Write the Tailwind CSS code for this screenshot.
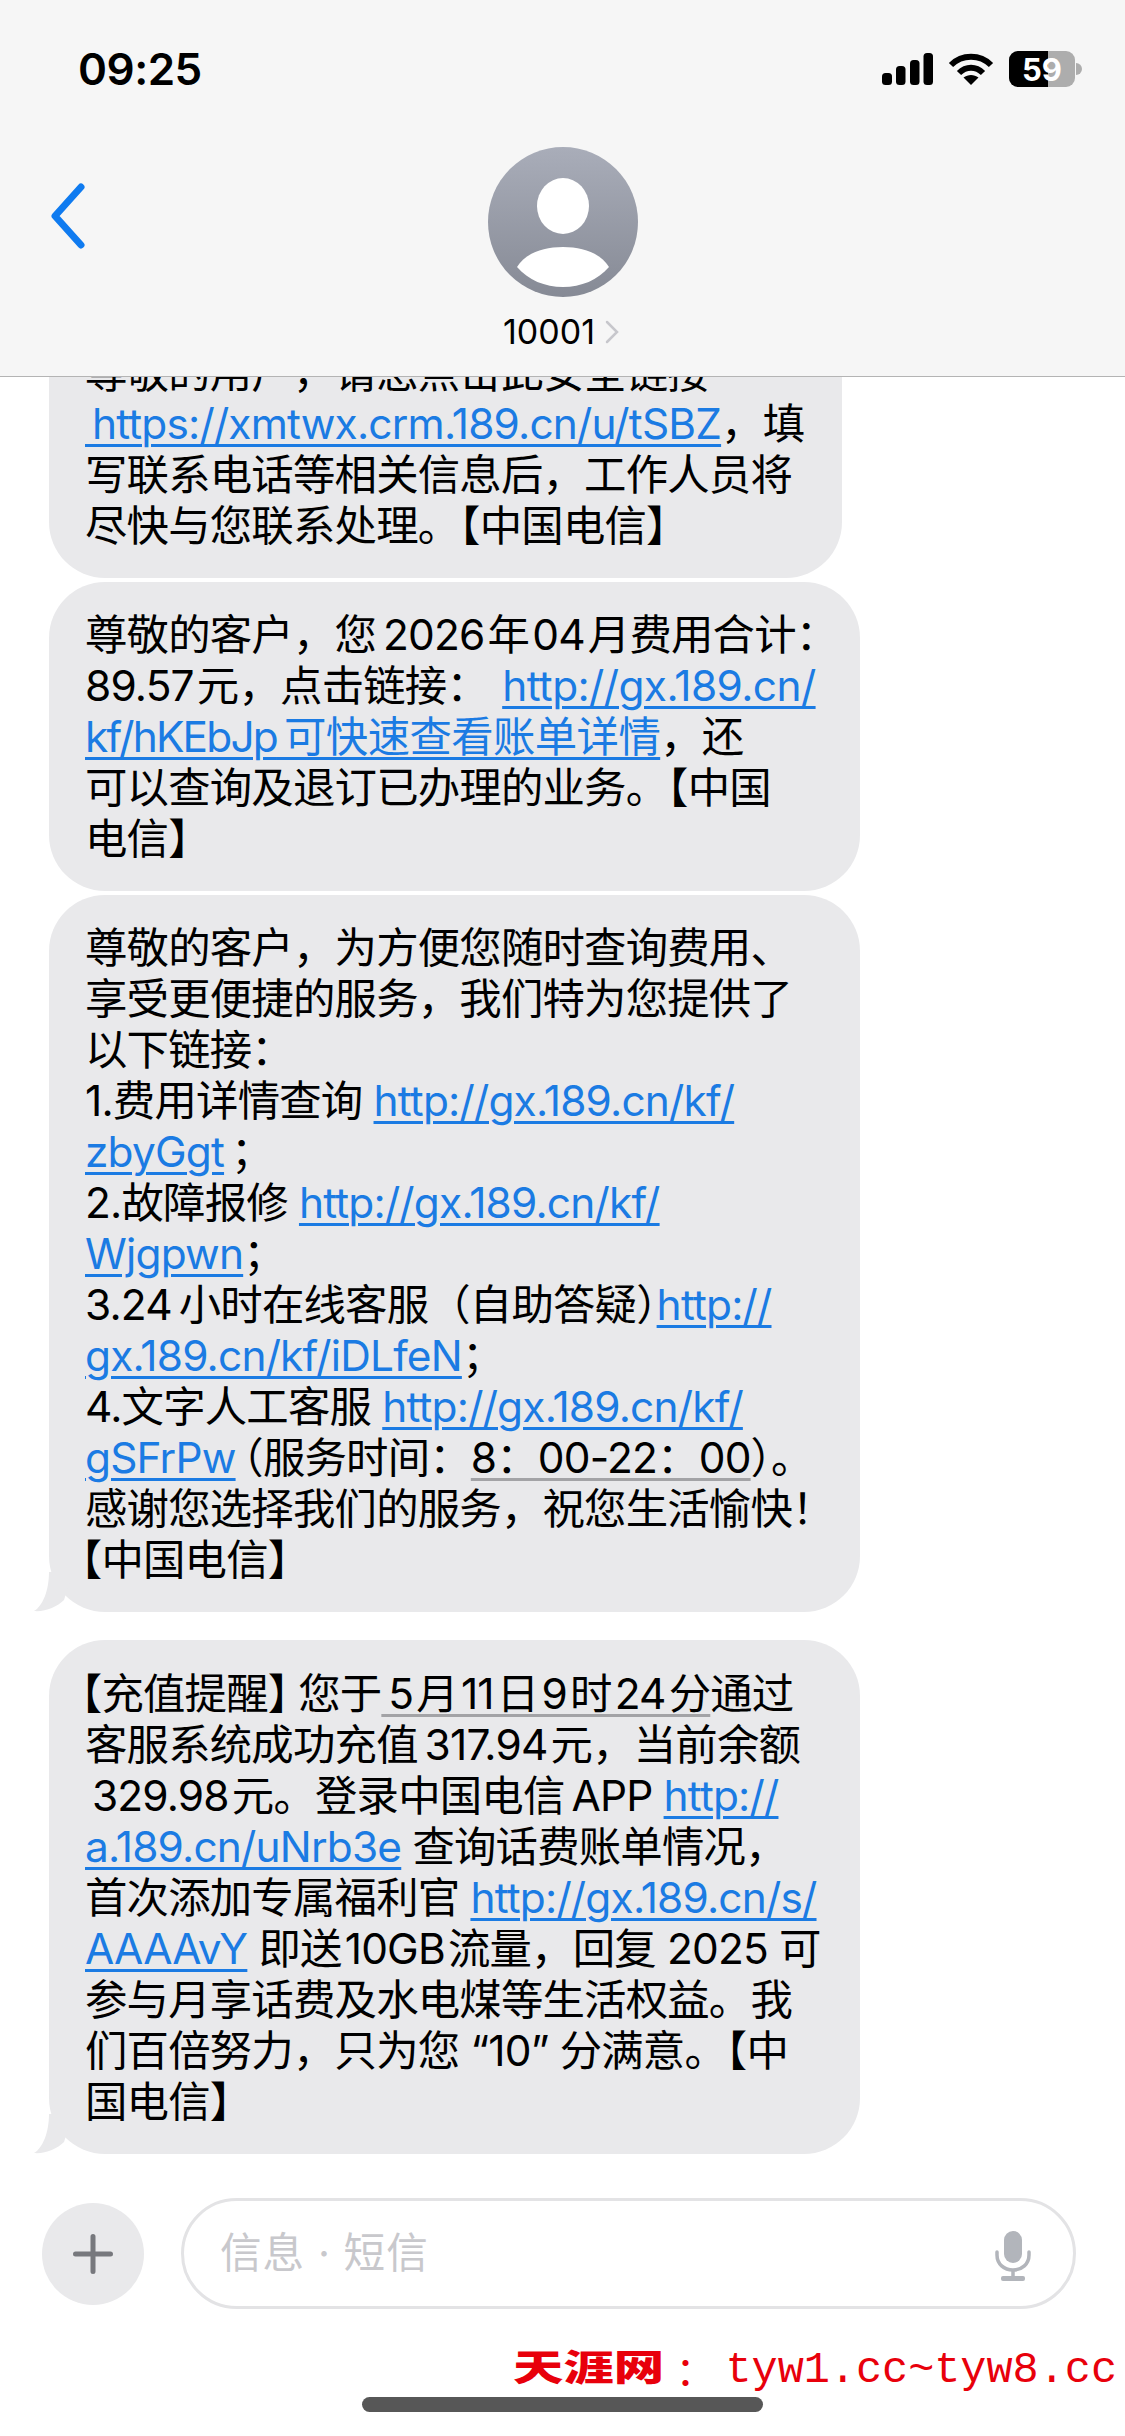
<!DOCTYPE html>
<html lang="zh-CN">
<head>
    <meta charset="UTF-8">
    <title>10001</title>
    <script src="https://cdn.jsdelivr.net/npm/@tailwindcss/browser@4"></script>
</head>
<body class="bg-white">
    <div class="w-[1125px] h-[2436px] flex flex-col overflow-hidden bg-white text-black font-['Inter','Noto_Sans_CJK_SC',sans-serif]">

        <!-- Header -->
        <header class="h-[377px] shrink-0 bg-[#f6f6f6] border-b border-[#b4b4b4]">
            <div class="h-[36px] pt-[51px] box-content flex items-center justify-between pl-[78px] pr-[43px]">
                <span class="text-[44px] font-semibold leading-none tracking-[-0.5px]">09:25</span>
                <div class="flex items-center">
                    <svg class="w-[51px] h-[32px]" viewBox="0 0 51 32" fill="#000">
                        <rect x="0" y="20" width="10" height="12" rx="3.5"/>
                        <rect x="14" y="13" width="9.5" height="19" rx="3.5"/>
                        <rect x="28" y="7" width="9.5" height="25" rx="3.5"/>
                        <rect x="41.5" y="0" width="9.5" height="32" rx="3.5"/>
                    </svg>
                    <svg class="w-[46px] h-[34px] ml-[15px]" viewBox="0 0 46 34" fill="none" stroke="#000">
                        <path d="M3 13 C14 2 32 2 43 13" stroke-width="6"/>
                        <path d="M11 21 C18 14 28 14 35 21" stroke-width="6"/>
                        <path d="M23 33 L15.5 25.5 C20 22 26 22 30.5 25.5 Z" fill="#000" stroke="none"/>
                    </svg>
                    <div class="w-[66px] h-[36px] ml-[15px] rounded-[9px] overflow-hidden flex bg-[#adadad] relative">
                        <div class="w-[39px] bg-black"></div>
                        <span class="absolute inset-0 flex items-center justify-center text-white text-[31px] font-bold leading-none">59</span>
                    </div>
                    <div class="w-[6px] h-[12px] ml-[1px] bg-[#adadad] rounded-r-full"></div>
                </div>
            </div>
            <div class="grid grid-cols-[1fr_auto_1fr] mt-[60px]">
                <svg class="w-[40px] h-[66px] ml-[48px] mt-[36px]" viewBox="0 0 40 66" fill="none" stroke="#0f7bf0" stroke-width="7" stroke-linecap="round" stroke-linejoin="round">
                    <path d="M33 4 L7 33 L33 62"/>
                </svg>
                <div class="flex flex-col items-center">
                    <svg class="w-[150px] h-[150px]" viewBox="0 0 150 150">
                        <defs>
                            <linearGradient id="avatarBg" x1="0" y1="0" x2="0" y2="1">
                                <stop offset="0" stop-color="#a9adb9"/>
                                <stop offset="1" stop-color="#868a95"/>
                            </linearGradient>
                        </defs>
                        <circle cx="75" cy="75" r="75" fill="url(#avatarBg)"/>
                        <ellipse cx="75" cy="59" rx="26" ry="28" fill="#fff"/>
                        <path d="M29 120 C38 106 55 100 75 100 C95 100 112 106 121 120 C110 133 93 140 75 140 C57 140 40 133 29 120 Z" fill="#fff"/>
                    </svg>
                    <div class="flex items-center mt-[17px] -ml-[3px]">
                        <span class="text-[34px] leading-[36px]">10001</span>
                        <svg class="w-[14px] h-[24px] ml-[10px]" viewBox="0 0 14 24" fill="none" stroke="#c7c7cc" stroke-width="2.5" stroke-linecap="round">
                            <path d="M2 2 L12 12 L2 22"/>
                        </svg>
                    </div>
                </div>
                <div></div>
            </div>
        </header>

        <!-- Messages, pinned to the bottom and clipped under the header -->
        <main class="flex-1 min-h-0 overflow-hidden flex flex-col justify-end items-start pl-[49px] pb-[44px] text-[42.4px] tracking-[-0.8px] leading-[51px] whitespace-nowrap">
            <div class="w-[793px] shrink-0 bg-[#e9e9eb] rounded-[56px] pl-[36px] py-[27px]">
                尊敬的用户，请您点击此安全链接<br>
                <a class="text-[#1b7be3] underline decoration-[3px] underline-offset-[5px]">&thinsp;https://xmtwx.crm.189.cn/u/tSBZ</a>，填<br>
                写联系电话等相关信息后，工作人员将<br>
                尽快与您联系处理。【中国电信】
            </div>
            <div class="w-[811px] shrink-0 mt-[4px] bg-[#e9e9eb] rounded-[56px] pl-[36px] py-[27px]">
                尊敬的客户，您&thinsp;2026&hairsp;年&hairsp;04&hairsp;月费用合计：<br>
                89.57&hairsp;元，点击链接：&hairsp; <a class="text-[#1b7be3] underline decoration-[3px] underline-offset-[5px] tracking-[-0.6px]">http://gx.189.cn/<br><span class="tracking-[-1.8px]">kf/hKEbJp</span>&thinsp;可快速查看账单详情</a>，还<br>
                可以查询及退订已办理的业务。【中国<br>
                电信】
            </div>
            <div class="relative w-[811px] shrink-0 mt-[4px] bg-[#e9e9eb] rounded-[56px] pl-[36px] py-[27px]">
                尊敬的客户，为方便您随时查询费用、<br>
                享受更便捷的服务，我们特为您提供了<br>
                以下链接：<br>
                1.费用详情查询 <a class="text-[#1b7be3] underline decoration-[3px] underline-offset-[5px]">http://gx.189.cn/kf/<br>zbyGgt</a>&thinsp;；<br>
                2.故障报修 <a class="text-[#1b7be3] underline decoration-[3px] underline-offset-[5px]">http://gx.189.cn/kf/<br>Wjgpwn</a>；<br>
                3.24&thinsp;小时在线客服（自助答疑<span class="[font-feature-settings:'halt']">）</span><a class="text-[#1b7be3] underline decoration-[3px] underline-offset-[5px]">http://<br>gx.189.cn/kf/iDLfeN</a>；<br>
                4.文字人工客服 <a class="text-[#1b7be3] underline decoration-[3px] underline-offset-[5px]">http://gx.189.cn/kf/<br>gSFrPw</a>&thinsp;<span class="[font-feature-settings:'halt']">（</span>服务时间：<span class="underline decoration-[#a3a3a6] decoration-[3px] underline-offset-[5px]">8：00-22：00</span>）。<br>
                感谢您选择我们的服务，祝您生活愉快！<br>
                <span class="[font-feature-settings:'halt'] -ml-[4px]">【</span>中国电信<span class="[font-feature-settings:'halt']">】</span>
                <svg class="absolute left-[-16px] bottom-0 w-[40px] h-[40px]" viewBox="0 0 40 40" fill="#e9e9eb">
                    <path d="M16 0 C16 18 10 34 1 39 C12 40 24 35 31 28 L40 0 Z"/>
                </svg>
            </div>
            <div class="relative w-[811px] shrink-0 mt-[28px] bg-[#e9e9eb] rounded-[56px] pl-[36px] pt-[28px] pb-[27px]">
                <span class="[font-feature-settings:'halt'] -ml-[4px]">【</span>充值提醒<span class="[font-feature-settings:'halt']">】</span><span class="ml-[10px]">您于</span><span class="underline decoration-[#a3a3a6] decoration-[3px] underline-offset-[5px]">&thinsp;5&hairsp;月&hairsp;11&hairsp;日&hairsp;9&hairsp;时&hairsp;24&hairsp;分</span>通过<br>
                客服系统成功充值&thinsp;317.94&hairsp;元，当前余额<br>
                &thinsp;329.98&hairsp;元。登录中国电信&thinsp;APP <a class="text-[#1b7be3] underline decoration-[3px] underline-offset-[5px]">http://<br>a.189.cn/uNrb3e</a> 查询话费账单情况，<br>
                首次添加专属福利官 <a class="text-[#1b7be3] underline decoration-[3px] underline-offset-[5px]">http://gx.189.cn/s/<br>AAAAvY</a> 即送&hairsp;10GB&hairsp;流量，回复 2025 可<br>
                参与月享话费及水电煤等生活权益。我<br>
                们百倍努力，只为您 “10” 分满意。【中<br>
                国电信】
                <svg class="absolute left-[-16px] bottom-0 w-[40px] h-[40px]" viewBox="0 0 40 40" fill="#e9e9eb">
                    <path d="M16 0 C16 18 10 34 1 39 C12 40 24 35 31 28 L40 0 Z"/>
                </svg>
            </div>
        </main>

        <!-- Composer -->
        <div class="h-[111px] shrink-0 flex items-center pl-[42px] pr-[49px]">
            <div class="w-[102px] h-[102px] shrink-0 rounded-full bg-[#e9e9eb] flex items-center justify-center">
                <svg class="w-[40px] h-[40px]" viewBox="0 0 40 40" stroke="#77787d" stroke-width="5" stroke-linecap="round">
                    <path d="M20 2.5 V37.5 M2.5 20 H37.5"/>
                </svg>
            </div>
            <div class="flex-1 h-[111px] ml-[37px] rounded-[56px] border-[3px] border-[#e3e3e5] flex items-center justify-between pl-[36px] pr-[42px]">
                <span class="text-[41.6px] leading-none tracking-[1px] text-[#c8c8cc]">信息 · 短信</span>
                <svg class="w-[36px] h-[50px] mt-[4px]" viewBox="0 0 36 50" fill="none" stroke="#b2b5bb">
                    <rect x="9" y="0" width="18" height="32" rx="9" fill="#b2b5bb" stroke="none"/>
                    <path d="M2 21 V24 C2 33 9 39 18 39 C27 39 34 33 34 24 V21" stroke-width="3.5" stroke-linecap="round"/>
                    <path d="M18 39 V47" stroke-width="3.5"/>
                    <rect x="6" y="45" width="24" height="5" rx="2" fill="#b2b5bb" stroke="none"/>
                </svg>
            </div>
        </div>

        <!-- Watermark and home indicator -->
        <div class="h-[127px] shrink-0 flex flex-col items-center">
            <div class="self-end flex items-center h-[44px] mt-[40px] pr-[8px] text-[#e8000b] whitespace-nowrap">
                <span class="w-[154px] -mt-[6px] text-[36px] font-black leading-none origin-left scale-x-[1.4]">天涯网</span>
                <span class="w-[58px] pl-[8px] text-[40px] leading-none">：</span>
                <span class="text-[43.5px] leading-none font-['Liberation_Mono',monospace]">tyw1.cc~tyw8.cc</span>
            </div>
            <div class="w-[401px] h-[15px] mt-[4px] rounded-full bg-[#575757]"></div>
        </div>
    </div>
</body>
</html>
